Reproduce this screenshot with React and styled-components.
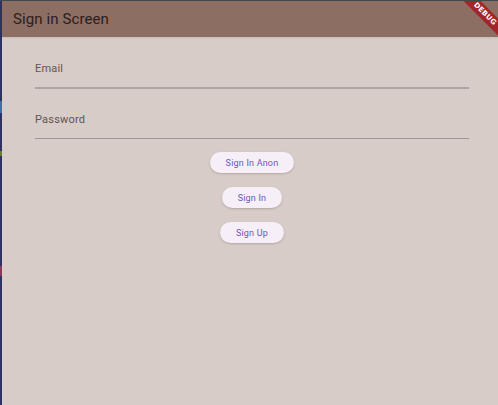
import React from 'react';
import styled, { createGlobalStyle } from 'styled-components';

const Global = createGlobalStyle`
  html, body {
    margin: 0;
    padding: 0;
    background: #d7ccc8;
  }
  body {
    font-family: Roboto, "Noto Sans", "Liberation Sans", sans-serif;
  }
`;

const Window = styled.div`
  position: relative;
  width: 498px;
  height: 405px;
  overflow: hidden;
  display: flex;
  background: #d7ccc8;
  border-top: 1px solid #3e4a4d;
  box-sizing: border-box;
`;

const SideStrip = styled.div`
  width: 2px;
  flex: none;
  background: linear-gradient(
    #2f3260 0 100px,
    #3d6fb0 100px 112px,
    #2f3260 112px 150px,
    #6b7a2c 150px 155px,
    #2f3260 155px 265px,
    #8c3a5a 265px 275px,
    #2f3260 275px
  );
`;

const Screen = styled.div`
  flex: 1;
  display: flex;
  flex-direction: column;
`;

const AppBar = styled.header`
  height: 36px;
  background: #8d6e63;
  display: flex;
  align-items: center;
  padding-left: 11px;
  box-shadow: 0 1px 2px rgba(0, 0, 0, 0.08);
`;

const Title = styled.h1`
  margin: 0;
  font-size: 15px;
  font-weight: 400;
  color: #2a2020;
  letter-spacing: 0.1px;
`;

const Body = styled.main`
  display: flex;
  flex-direction: column;
  align-items: center;
  padding: 2px 29px 0 33px;
`;

const Field = styled.label`
  align-self: stretch;
  display: flex;
  flex-direction: column;
  height: 50px;
  justify-content: flex-end;
  border-bottom: ${(p) => (p.thick ? '2px solid #b0a5a2' : '1px solid #a2959a')};
  box-sizing: border-box;
`;

const Label = styled.span`
  font-size: 11px;
  color: #5e5456;
  letter-spacing: 0.2px;
  padding-bottom: 12px;
`;

const Buttons = styled.div`
  display: flex;
  flex-direction: column;
  align-items: center;
  gap: 14px;
  margin-top: 13px;
`;

const Pill = styled.button`
  height: 21px;
  padding: 0 16px;
  border: none;
  border-radius: 11px;
  background: #f6eff8;
  color: #6f55b4;
  font-family: Roboto, "Noto Sans", sans-serif;
  font-size: 9px;
  letter-spacing: 0.2px;
  box-shadow: 0 1px 2px rgba(80, 60, 60, 0.25);
  cursor: pointer;
`;

const Banner = styled.div`
  position: absolute;
  top: 7px;
  right: -20px;
  width: 66px;
  height: 12px;
  background: #a0262a;
  transform: rotate(45deg);
  display: flex;
  align-items: center;
  justify-content: center;
  color: #fff;
  font-family: "DejaVu Sans", sans-serif;
  font-size: 7px;
  font-weight: 700;
  letter-spacing: 0.3px;
`;

export default function App() {
  return (
    <>
      <Global />
      <Window>
        <SideStrip />
        <Screen>
          <AppBar>
            <Title>Sign in Screen</Title>
          </AppBar>
          <Body>
            <Field thick>
              <Label>Email</Label>
            </Field>
            <Field>
              <Label>Password</Label>
            </Field>
            <Buttons>
              <Pill>Sign In Anon</Pill>
              <Pill>Sign In</Pill>
              <Pill>Sign Up</Pill>
            </Buttons>
          </Body>
        </Screen>
        <Banner>DEBUG</Banner>
      </Window>
    </>
  );
}
